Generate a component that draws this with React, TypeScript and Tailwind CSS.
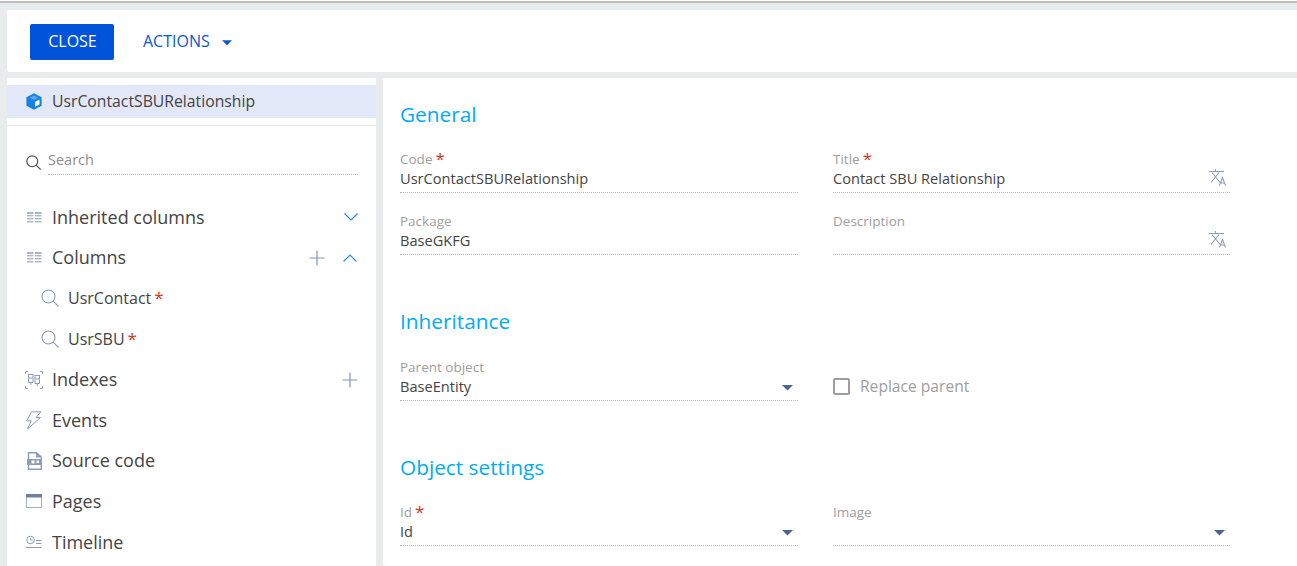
import React from 'react';

const Caret = ({ className = '' }: { className?: string }) => (
  <svg width="11" height="6" viewBox="0 0 11 6" className={className}>
    <path d="M0 0h11L5.5 5.5z" fill="currentColor" />
  </svg>
);

const Star = () => <span className="text-[#d2371c] text-[17px] leading-[16px] ml-[3px]">*</span>;

const Plus = () => (
  <svg width="16" height="16" viewBox="0 0 16 16" stroke="#7f97bd" strokeWidth="1.2" fill="none">
    <path d="M8 .5v15M.5 8h15" />
  </svg>
);

const Chevron = ({ up }: { up?: boolean }) => (
  <svg width="14" height="8" viewBox="0 0 14 8" stroke="#2f8be6" strokeWidth="1.2" fill="none">
    <path d={up ? 'M.5 7.5L7 1l6.5 6.5' : 'M.5.5L7 7 13.5.5'} />
  </svg>
);

const Magnifier = ({ size, color, width }: { size: number; color: string; width: number }) => (
  <svg width={size} height={size} viewBox="0 0 18 18" fill="none" stroke={color} strokeWidth={width}>
    <circle cx="7.5" cy="7.5" r="6.5" />
    <path d="M12.2 12.2L17.5 17.5" />
  </svg>
);

const ColumnsIcon = () => (
  <svg width="15" height="11" viewBox="0 0 15 11" fill="#a9b6cc">
    <rect x="0" y="0" width="6.5" height="2" />
    <rect x="8" y="0" width="6.5" height="2" />
    <rect x="0" y="3" width="6.5" height="1.4" />
    <rect x="8" y="3" width="6.5" height="1.4" />
    <rect x="0" y="6" width="6.5" height="1.4" />
    <rect x="8" y="6" width="6.5" height="1.4" />
    <rect x="0" y="9" width="6.5" height="1.4" />
    <rect x="8" y="9" width="6.5" height="1.4" />
  </svg>
);

const IndexesIcon = () => (
  <svg width="18" height="18" viewBox="0 0 18 18" fill="none" stroke="#8c9dba" strokeWidth="1">
    <path d="M.5 3V.5H3M15 .5h2.5V3M17.5 15v2.5H15M3 17.5H.5V15" />
    <rect x="3.5" y="3.5" width="4.5" height="3.5" />
    <path d="M3.5 7.5v4H8v-4M5.8 11.5v2.5" />
    <rect x="10" y="4.5" width="4.5" height="3.5" />
    <path d="M10 8.5v4h4.5v-4M12.2 12.5v2.5" />
  </svg>
);

const BoltIcon = () => (
  <svg width="16" height="19" viewBox="0 0 16 19" fill="none" stroke="#8c9dba" strokeWidth="1">
    <path d="M5.5.8H15L10 6.5h4.5L1.5 18l3.8-8.2H.8z" />
  </svg>
);

const SourceIcon = () => (
  <svg width="15" height="18" viewBox="0 0 15 18">
    <path d="M1.5.7h8L14.3 5v12.3H1.5z" fill="#fff" stroke="#8c9dba" strokeWidth="1.4" />
    <path d="M9 .5V5.5h5.5z" fill="#8c9dba" />
    <rect x="0" y="7" width="15" height="6" fill="#8c9dba" />
    <rect x="4.5" y="8.5" width="3" height="3" fill="#fff" />
    <rect x="9.5" y="8.5" width="2.5" height="2.5" fill="#fff" />
  </svg>
);

const PagesIcon = () => (
  <svg width="16" height="14" viewBox="0 0 16 14" fill="none">
    <rect x=".5" y=".5" width="15" height="13" stroke="#9fb0cb" />
    <rect x="0" y="0" width="16" height="3.5" fill="#70819f" />
  </svg>
);

const TimelineIcon = () => (
  <svg width="16" height="14" viewBox="0 0 16 14" fill="none" stroke="#8c9dba" strokeWidth="1">
    <circle cx="4.5" cy="5" r="3.8" />
    <path d="M4.5 2.8V5h2" />
    <path d="M10 5.5h5.5M10 8.5h5.5M0 12.5h15.5" />
  </svg>
);

const CubeIcon = () => (
  <svg width="16" height="17" viewBox="0 0 16 17">
    <path d="M8 .3l7.6 4v8.4L8 16.7.4 12.7V4.300z" fill="#1780e6" />
    <path d="M8 2.600l4.300 2.200L8 7 3.700 4.800z" fill="#5aa9f2" />
    <path d="M9.200 8.800l4.300-2.300v5L9.200 13.800z" fill="#fff" />
  </svg>
);

const TranslateIcon = () => (
  <svg width="18" height="17" viewBox="0 0 18 17" fill="none" stroke="#8d9dba" strokeWidth="1.1" className="mr-[3px] -mt-[2px]">
    <path d="M0 2.500h15M6.500 0v2.500" />
    <path d="M3 3.500l8 10M10 3.500l-8 10" />
    <path d="M10.500 16.500l3-8 3 8M11.500 14h4" />
  </svg>
);

const Field = ({
  label,
  value,
  required,
  suffix,
}: {
  label: string;
  value?: string;
  required?: boolean;
  suffix?: React.ReactNode;
}) => (
  <div className="h-[43px] border-b border-dotted border-[#b5b5b5]">
    <div className="h-[18px] flex items-center text-[13.5px] leading-[18px] text-[#9e9e9e]">
      {label}
      {required && <Star />}
    </div>
    <div className="h-[20px] flex items-center justify-between text-[#444] text-[14.6px] leading-[20px]">
      <span>{value}</span>
      {suffix}
    </div>
  </div>
);

const NavRow = ({
  icon,
  label,
  children,
}: {
  icon: React.ReactNode;
  label: string;
  children?: React.ReactNode;
}) => (
  <div className="h-[40.6px] flex items-center pl-[17px] pr-[18px] text-[#444] text-[18px]">
    <div className="w-[20px] mr-[8px] flex items-center justify-center">{icon}</div>
    <span className="flex-1">{label}</span>
    {children}
  </div>
);

const ColumnRow = ({ label }: { label: string }) => (
  <div className="h-[40.6px] flex items-center pl-[34px] text-[#444] text-[16px]">
    <span className="mr-[9px]">
      <Magnifier size={18} color="#8c9dba" width={1.1} />
    </span>
    {label}
    <Star />
  </div>
);

const SectionTitle = ({ children }: { children: string }) => (
  <h2 className="text-[#00adf2] text-[20.8px] leading-[28px]">{children}</h2>
);

export default function App() {
  return (
    <div
      className="w-[1297px] h-[566px] overflow-hidden bg-[#e9eced] flex flex-col"
      style={{ fontFamily: '"Open Sans", sans-serif' }}
    >
      <div className="h-[1px] bg-white shrink-0" />
      <div className="h-[2px] bg-[#bdbdbd] shrink-0" />
      <div className="flex-1 min-h-0 flex flex-col pl-[7px]">
        <header className="mt-[7px] h-[62px] shrink-0 bg-white rounded-l-[3px] flex items-center pl-[23px] pt-[1px]">
          <button className="w-[84px] h-[36px] pb-[2px] pl-[1px] bg-[#0054d9] rounded-[2px] text-white text-[16px]">
            CLOSE
          </button>
          <button className="ml-[29px] pb-[2px] flex items-center text-[#0a58d6] text-[16px]">
            ACTIONS
            <Caret className="ml-[12px] mt-[4px] text-[#0a58d6] w-[10px]" />
          </button>
        </header>

        <div className="flex gap-[7px] mt-[6px] flex-1 min-h-0">
          <aside className="w-[369px] shrink-0 bg-white pt-[7px]">
            <div className="h-[33px] bg-[#e2e8f7] flex items-center pl-[19px] text-[#444] text-[15.75px]">
              <CubeIcon />
              <span className="ml-[10px]">UsrContactSBURelationship</span>
            </div>
            <div className="mt-[7px] border-t border-[#e4e4e4]" />
            <div className="mt-[24px] flex items-center pl-[19px] pr-[18px]">
              <span className="mr-[7px] mt-[-1px]">
                <Magnifier size={15} color="#555" width={1.5} />
              </span>
              <div className="flex-1 h-[25px] border-b border-dotted border-[#b5b5b5] text-[14.5px] text-[#8e8e8e] leading-[20px]">
                Search
              </div>
            </div>
            <div className="mt-[22px]">
              <NavRow icon={<ColumnsIcon />} label="Inherited columns">
                <Chevron />
              </NavRow>
              <NavRow icon={<ColumnsIcon />} label="Columns">
                <div className="flex items-center gap-[18px] mr-[1px]">
                  <Plus />
                  <Chevron up />
                </div>
              </NavRow>
              <ColumnRow label="UsrContact" />
              <ColumnRow label="UsrSBU" />
              <NavRow icon={<IndexesIcon />} label="Indexes">
                <Plus />
              </NavRow>
              <NavRow icon={<BoltIcon />} label="Events" />
              <NavRow icon={<SourceIcon />} label="Source code" />
              <NavRow icon={<PagesIcon />} label="Pages" />
              <NavRow icon={<TimelineIcon />} label="Timeline" />
            </div>
          </aside>

          <main className="flex-1 bg-white rounded-l-[3px] pl-[17px] pt-[22px]">
            <SectionTitle>General</SectionTitle>
            <div className="grid grid-cols-[398px_397px] gap-x-[35px] gap-y-[19px] mt-[22px]">
              <Field label="Code" value="UsrContactSBURelationship" required />
              <Field label="Title" value="Contact SBU Relationship" required suffix={<TranslateIcon />} />
              <Field label="Package" value="BaseGKFG" />
              <Field label="Description" suffix={<TranslateIcon />} />
            </div>

            <div className="mt-[52px]">
              <SectionTitle>Inheritance</SectionTitle>
            </div>
            <div className="grid grid-cols-[398px_397px] gap-x-[35px] mt-[23px]">
              <Field
                label="Parent object"
                value="BaseEntity"
                suffix={<Caret className="text-[#4a6496] mr-[5px] mt-[3px]" />}
              />
              <div className="flex items-center h-[20px] mt-[18px] text-[15.6px] text-[#9e9e9e]">
                <span className="w-[17px] h-[17px] border-2 border-[#9e9e9e] rounded-[2px] mr-[10px]" />
                <span className="pt-[2px]">Replace parent</span>
              </div>
            </div>

            <div className="mt-[52px]">
              <SectionTitle>Object settings</SectionTitle>
            </div>
            <div className="grid grid-cols-[398px_397px] gap-x-[35px] mt-[22px]">
              <Field label="Id" value="Id" required suffix={<Caret className="text-[#4a6496] mr-[5px] mt-[3px]" />} />
              <Field label="Image" suffix={<Caret className="text-[#4a6496] mr-[5px] mt-[3px]" />} />
            </div>
          </main>
        </div>
      </div>
    </div>
  );
}
